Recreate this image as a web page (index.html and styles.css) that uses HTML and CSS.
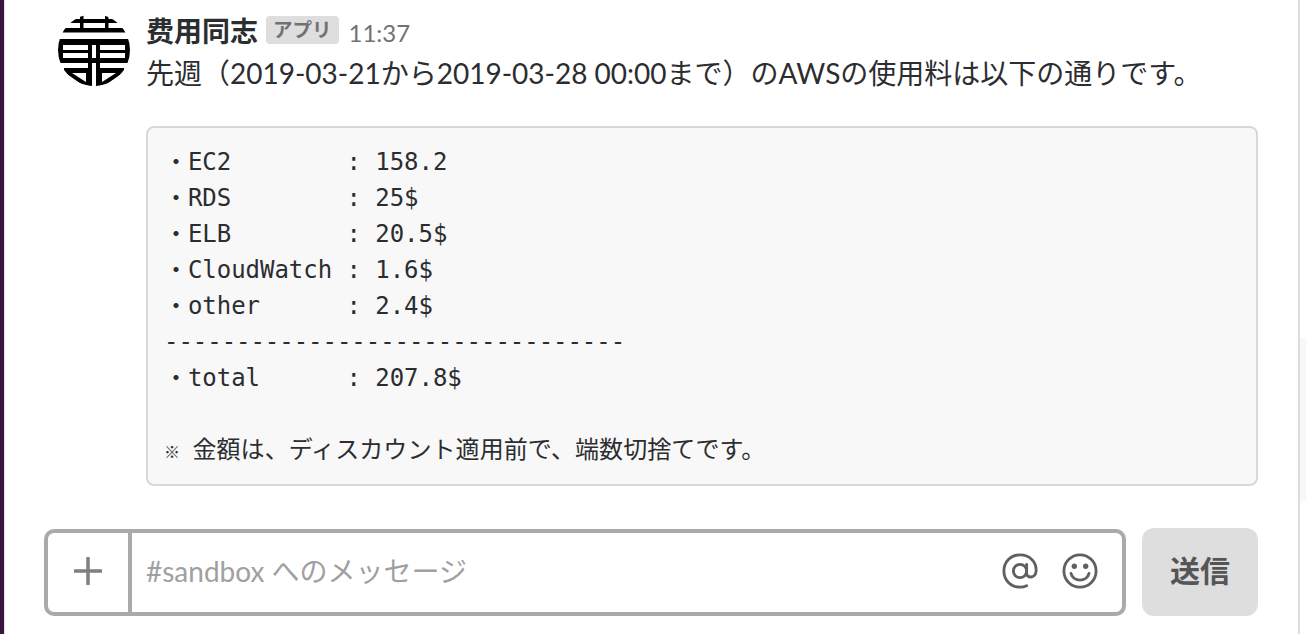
FILE: index.html
```html
<!DOCTYPE html>
<html lang="ja">
<head>
<meta charset="utf-8">
<title>sandbox</title>
<link rel="stylesheet" href="styles.css">
</head>
<body>
<div class="app">
  <div class="rail"></div>
  <main class="main">
    <article class="message">
      <svg class="avatar" viewBox="0 0 72 72" aria-hidden="true">
        <defs><clipPath id="disc"><circle cx="36" cy="36" r="36"/></clipPath></defs>
        <g clip-path="url(#disc)" fill="#000">
          <path d="M14 5h44l3 4H11z"/>
          <rect x="22" y="0" width="3.500" height="15"/>
          <rect x="47" y="0" width="3.500" height="15"/>
          <rect x="0" y="14" width="72" height="4.500"/>
          <rect x="0" y="25" width="72" height="6"/>
          <rect x="0" y="31" width="5" height="14"/>
          <rect x="67" y="31" width="5" height="14"/>
          <rect x="5" y="36" width="25" height="3"/>
          <rect x="42" y="36" width="25" height="3"/>
          <rect x="0" y="44" width="72" height="5"/>
          <path fill-rule="evenodd" d="M6 54H34V72H26L6 58zM14 59L28 68V59z"/>
          <path fill-rule="evenodd" d="M66 54H38V72H46L66 58zM58 59L44 68V59z"/>
          <rect x="30" y="25" width="4" height="47"/>
          <rect x="38" y="25" width="4" height="47"/>
        </g>
      </svg>
      <div class="body">
        <div class="meta">
          <span class="sender">费用同志</span>
          <span class="tag">アプリ</span>
          <span class="time">11:37</span>
        </div>
        <p class="text">先週（2019-03-21から2019-03-28 00:00まで）のAWSの使用料は以下の通りです。</p>
        <pre class="code">・EC2        : 158.2
・RDS        : 25$
・ELB        : 20.5$
・CloudWatch : 1.6$
・other      : 2.4$
--------------------------------
・total      : 207.8$

<span class="mark">※</span> <span class="note">金額は、ディスカウント適用前で、端数切捨てです。</span></pre>
      </div>
    </article>
    <footer class="composer">
      <div class="field">
        <div class="plus">
          <svg class="plus-icon" viewBox="0 0 28 28" aria-hidden="true"><path d="M14 1v26M1 14h26"/></svg>
        </div>
        <div class="input">
          <span class="placeholder">#sandbox へのメッセージ</span>
          <svg class="tool" viewBox="0 0 38 38" aria-hidden="true"><circle cx="19" cy="19" r="7"/><path d="M26 12v9.500c0 5.500 9.500 5.500 10-2.500C36.500 9 29 2 19 2 9 2 2 9.500 2 19s7 17 17 17c3 0 5-.5 7-1.500"/></svg>
          <svg class="tool" viewBox="0 0 38 38" aria-hidden="true"><circle cx="19" cy="19" r="17"/><path d="M9.500 21.500c2 9.500 17 9.500 19 0"/><circle class="eye" cx="13" cy="14" r="2.800"/><circle class="eye" cx="25" cy="14" r="2.800"/></svg>
        </div>
      </div>
      <button class="send">送信</button>
    </footer>
  </main>
  <aside class="scroll"><div class="thumb"></div></aside>
</div>
</body>
</html>
```
FILE: styles.css
```css
* { box-sizing: border-box; }
html, body { margin: 0; height: 100%; background: #fff; overflow: hidden; }
body {
  font-family: Lato, "Noto Sans CJK JP", sans-serif;
  color: #2c2d30;
}
.app { display: flex; height: 634px; }
.rail {
  width: 5px;
  background: #3b1540;
  border-right: 1px solid #e2e2e2;
}
.main { width: 1253px; display: flex; flex-direction: column; }
.message { display: flex; gap: 16px; padding: 14px 0 0 53px; height: 528px; }
.avatar { width: 72px; height: 72px; flex: none; }
.body { flex: 1; min-width: 0; }
.meta { display: flex; align-items: center; height: 32px; margin-top: 1px; }
.sender { font-size: 28px; font-weight: 700; line-height: 32px; color: #2c2d30; }
.tag {
  margin: 0 0 2px 8px;
  padding: 0 7px;
  height: 28px;
  line-height: 28px;
  border-radius: 4px;
  background: #dedede;
  color: #717274;
  font-size: 19.500px;
  font-weight: 700;
}
.time { margin: 2px 0 0 10px; font-size: 24px; color: #717274; }
.text { margin: 8px 0 0; font-size: 28px; line-height: 36px; white-space: nowrap; }
.code {
  margin: 35px 0 0;
  height: 360px;
  padding: 16px 0 0 16px;
  border: 2px solid #d8d8d8;
  border-radius: 8px;
  background: #f8f8f8;
  font-family: "DejaVu Sans Mono", "Noto Sans CJK JP", monospace;
  font-size: 24px;
  line-height: 36px;
  letter-spacing: -0.04px;
  color: #2c2d30;
}
.mark { font-size: 16px; font-weight: 700; margin-right: -2px; }
.note { letter-spacing: 0.08px; }
.composer { display: flex; gap: 16px; padding-left: 39px; align-items: center; height: 88px; }
.field {
  flex: 1;
  height: 87px;
  display: flex;
  border: 4px solid #aaaaab;
  border-radius: 10px;
}
.plus {
  width: 84px;
  padding-bottom: 2px;
  border-right: 4px solid #aaaaab;
  display: flex;
  align-items: center;
  justify-content: center;
}
.plus-icon { width: 28px; height: 28px; fill: none; stroke: #7f7f81; stroke-width: 3.500; stroke-linecap: round; }
.input { flex: 1; display: flex; align-items: center; gap: 24px; padding: 0 24px 2px 14px; }
.placeholder { flex: 1; padding-bottom: 2px; font-size: 28px; color: #a0a0a2; white-space: nowrap; }
.tool { width: 36px; height: 36px; fill: none; stroke: #616061; stroke-width: 3; stroke-linecap: round; }
.tool .eye { fill: #616061; stroke: none; }
.send {
  width: 116px;
  height: 88px;
  border: 0;
  border-radius: 12px;
  background: #dedede;
  color: #555557;
  font: 700 30px Lato, "Noto Sans CJK JP", sans-serif;
  padding: 0 0 6px;
}
.scroll {
  margin-left: 40px;
  width: 8px;
  border-left: 2px solid #dcdcdc;
  padding-top: 338px;
}
.thumb { height: 163px; background: #f8f8f8; }
```
